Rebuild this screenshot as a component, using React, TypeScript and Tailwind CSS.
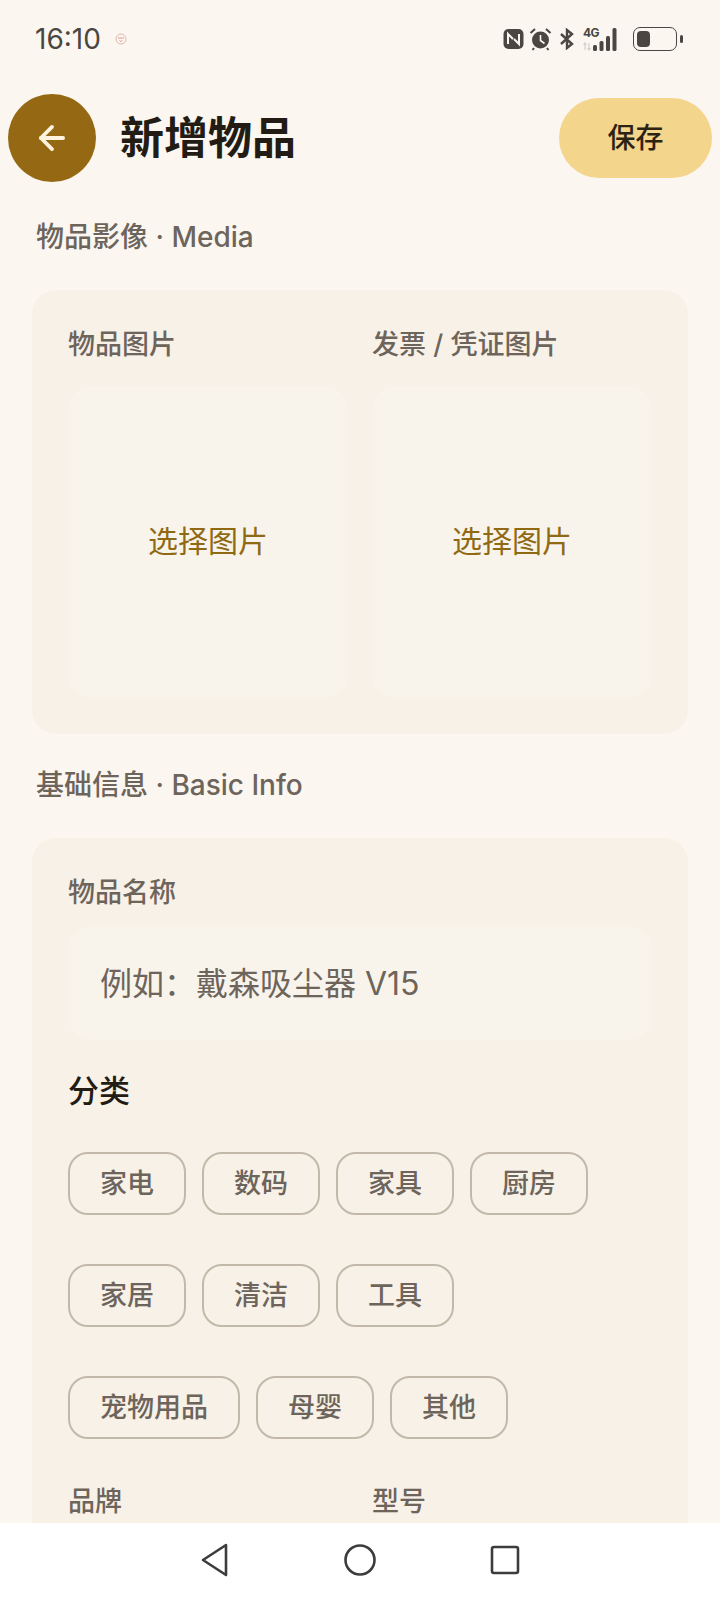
import { ArrowLeft } from 'lucide-react';

const FONT = 'font-["Inter","Noto_Sans_CJK_SC",sans-serif]';

const CATEGORY_ROWS = [
  ['家电', '数码', '家具', '厨房'],
  ['家居', '清洁', '工具'],
  ['宠物用品', '母婴', '其他'],
];

function StatusIcons() {
  return (
    <div className="flex items-center gap-[5px] text-[#4a4642]">
      {/* NFC */}
      <svg width="21" height="22" viewBox="0 0 21 22" fill="none">
        <rect x="0.5" y="1" width="20" height="20" rx="5" fill="currentColor" />
        <path d="M5 16V6l5 5M16 6v10l-5-5" stroke="#fbf6f0" strokeWidth="2" fill="none" />
      </svg>
      {/* 闹钟 */}
      <svg width="23" height="24" viewBox="0 0 23 24" fill="none">
        <circle cx="11.5" cy="13" r="8.5" fill="currentColor" />
        <path d="M11.5 8v5.5l4 3" stroke="#fbf6f0" strokeWidth="1.6" />
        <path d="M1.5 6 6 2M21.5 6 17 2M5 21l-1.5 2M18 21l1.5 2" stroke="currentColor" strokeWidth="2" />
      </svg>
      {/* 蓝牙 */}
      <svg width="16" height="22" viewBox="0 0 16 22" fill="none" className="ml-[2px]">
        <path d="M2 6l11 10-5 4V2l5 4L2 16" stroke="currentColor" strokeWidth="2.4" />
      </svg>
      {/* 4G + 信号 */}
      <div className="relative ml-[3px] h-[24px] w-[41px]">
        <span className="absolute left-0 top-[-3px] text-[12px] font-bold leading-[18px] tracking-[-0.5px]">4G</span>
        <svg width="41" height="24" viewBox="0 0 41 24" className="absolute inset-0">
          <path d="M2 23v-7M0.5 18 2 16l1.5 2M6 16v7M4.5 21 6 23l1.5-2" stroke="#d3cfca" strokeWidth="1.2" fill="none" />
          <rect x="10" y="18" width="4" height="6" rx="1.5" fill="currentColor" />
          <rect x="16.5" y="14" width="4" height="10" rx="1.5" fill="currentColor" />
          <rect x="23" y="9" width="4" height="15" rx="1.5" fill="currentColor" />
          <rect x="29.5" y="1" width="4" height="23" rx="1.5" fill="currentColor" />
        </svg>
      </div>
      {/* 电量 */}
      <div className="ml-[4px] flex items-center gap-[3px]">
        <div className="flex h-[24px] w-[44px] items-center rounded-[7px] border-[1.5px] border-current p-[3px]">
          <div className="h-full w-[13px] rounded-[4px] bg-current" />
        </div>
        <div className="h-[8px] w-[3px] rounded-full bg-current" />
      </div>
    </div>
  );
}

function StatusBar() {
  return (
    <div className="flex h-[78px] shrink-0 items-center justify-between pl-[35px] pr-[37px]">
      <div className="flex items-center gap-[14px]">
        <span className="text-[28px] leading-none text-[#4a4642]">16:10</span>
        <svg width="12" height="12" viewBox="0 0 12 12" fill="none">
          <circle cx="6" cy="6" r="5" stroke="#d9a9a0" strokeWidth="0.8" />
          <path d="M3 5h6M4.5 7.5 6 8.5l1.5-1" stroke="#d9867a" strokeWidth="0.8" />
        </svg>
      </div>
      <StatusIcons />
    </div>
  );
}

function Header() {
  return (
    <div className="flex h-[88px] shrink-0 items-center justify-between pl-[8px] pr-[8px] mt-[16px]">
      <div className="flex items-center gap-[24px]">
        <div className="flex h-[88px] w-[88px] items-center justify-center rounded-full bg-[#956913]">
          <ArrowLeft size={38} strokeWidth={2.4} color="#fdf3df" />
        </div>
        <h1 className="text-[44px] font-bold leading-none text-[#231c14]">新增物品</h1>
      </div>
      <button className="flex h-[80px] w-[153px] items-center justify-center rounded-full bg-[#f3d58c] text-[28px] font-medium text-[#2d2313]">
        保存
      </button>
    </div>
  );
}

function SectionTitle({ children }: { children: string }) {
  return <h2 className="text-[28px] font-medium leading-[40px] text-[#6d645b]">{children}</h2>;
}

function FieldLabel({ children }: { children: string }) {
  return <div className="text-[27px] font-medium leading-[38px] text-[#6d645b]">{children}</div>;
}

function ImagePicker({ label }: { label: string }) {
  return (
    <div className="flex flex-col gap-[22px]">
      <FieldLabel>{label}</FieldLabel>
      <div className="flex h-[311px] items-center justify-center rounded-[24px] bg-[#f8f4ec] text-[30px] text-[#8f6a12]">
        选择图片
      </div>
    </div>
  );
}

function Chip({ label }: { label: string }) {
  return (
    <div className="flex h-[63px] items-center justify-center rounded-[20px] border-2 border-[#c3b9ab] px-[30px] text-[27px] font-medium leading-none text-[#6d645b]">
      {label}
    </div>
  );
}

export default function App() {
  return (
    <div className={`flex h-[1600px] w-[720px] flex-col overflow-hidden bg-[#fbf6f0] ${FONT}`}>
      <StatusBar />
      <Header />
      <main className="min-h-0 flex-1 overflow-hidden">
        <div className="px-[36px] pt-[35px]">
          <SectionTitle>物品影像 · Media</SectionTitle>
        </div>
        <div className="mx-[32px] mt-[33px] grid grid-cols-2 gap-[24px] rounded-[24px] bg-[#f8f1e7] px-[36px] pb-[37px] pt-[36px]">
          <ImagePicker label="物品图片" />
          <ImagePicker label="发票 / 凭证图片" />
        </div>
        <div className="px-[36px] pt-[31px]">
          <SectionTitle>基础信息 · Basic Info</SectionTitle>
        </div>
        <div className="mx-[32px] mt-[33px] rounded-[24px] bg-[#f8f1e7] px-[36px] pt-[36px]">
          <FieldLabel>物品名称</FieldLabel>
          <div className="mt-[15px] flex h-[113px] items-center rounded-[24px] bg-[#f8f4ec] px-[32px] text-[32px] text-[#6d645b]">
            例如：戴森吸尘器 V15
          </div>
          <div className="mt-[31px] text-[31px] font-medium leading-[40px] text-[#231c14]">分类</div>
          <div className="mt-[41px] flex flex-col gap-[49px]">
            {CATEGORY_ROWS.map((row) => (
              <div key={row[0]} className="flex gap-[16px]">
                {row.map((c) => (
                  <Chip key={c} label={c} />
                ))}
              </div>
            ))}
          </div>
          <div className="mt-[44px] grid grid-cols-2 gap-[24px] pb-[40px]">
            <FieldLabel>品牌</FieldLabel>
            <FieldLabel>型号</FieldLabel>
          </div>
        </div>
      </main>
      <nav className="flex h-[77px] shrink-0 items-center justify-center gap-[114px] bg-white pb-[3px] text-[#3c3c3c]">
        <svg width="30" height="34" viewBox="0 0 30 34" fill="none">
          <path d="M26 2 3 17l23 15z" stroke="currentColor" strokeWidth="2.6" strokeLinejoin="round" transform="translate(0 0) scale(1 1)" />
        </svg>
        <svg width="32" height="32" viewBox="0 0 32 32" fill="none">
          <circle cx="16" cy="16" r="14.5" stroke="currentColor" strokeWidth="2.6" />
        </svg>
        <svg width="30" height="30" viewBox="0 0 30 30" fill="none">
          <rect x="2" y="2" width="26" height="26" rx="2" stroke="currentColor" strokeWidth="2.6" />
        </svg>
      </nav>
    </div>
  );
}
